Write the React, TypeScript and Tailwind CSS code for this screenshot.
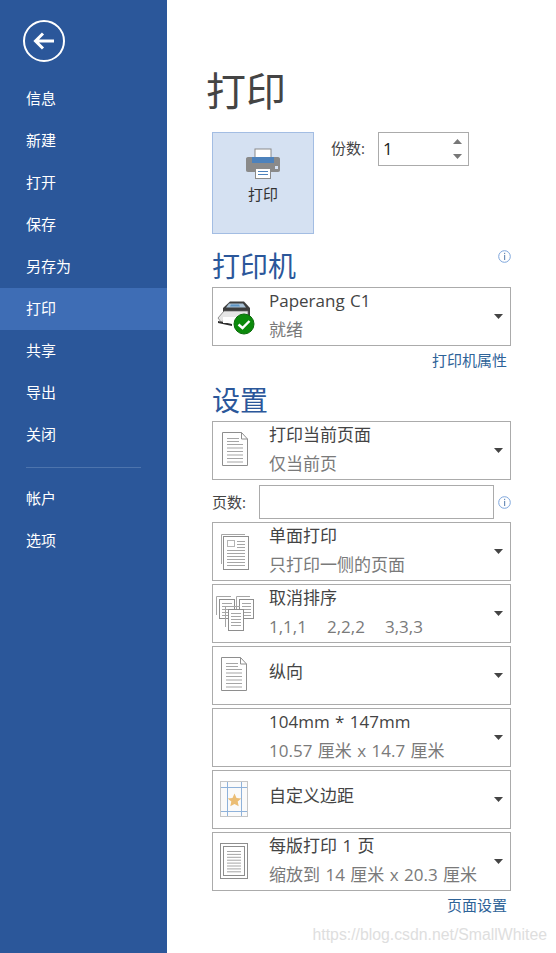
import React from "react";

const FONT = '"Open Sans","Noto Sans CJK SC",sans-serif';

const Lines = ({ x, y, w, n, gap = 3, c = "#a6a6a6" }: { x: number; y: number; w: number; n: number; gap?: number; c?: string }) => (
  <>
    {Array.from({ length: n }).map((_, i) => (
      <rect key={i} x={x} y={y + i * gap} width={w} height={1} fill={c} />
    ))}
  </>
);

const PageIcon = () => (
  <svg width="34" height="38" viewBox="0 0 34 38" fill="none" className="block">
    <path d="M5.5 .5H24.5L30.5 7V33.5H5.5Z" fill="#fff" stroke="#8e8e8e" />
    <path d="M24.5 .5V7H30.5" stroke="#8e8e8e" />
    <Lines x={10} y={6} w={12} n={2} />
    <Lines x={10} y={12} w={16} n={6} gap={3.5} />
  </svg>
);

const OneSidedIcon = () => (
  <svg width="34" height="40" viewBox="0 0 34 40" className="block">
    <path d="M5.5 32V2.500H29" fill="none" stroke="#a6a6a6" />
    <rect x="7.500" y="4.500" width="25" height="33" fill="#fff" stroke="#8e8e8e" />
    <rect x="11.500" y="8.500" width="7" height="6" fill="none" stroke="#b5b5b5" />
    <Lines x={21} y={9} w={8} n={3} gap={3} />
    <Lines x={11} y={18} w={18} n={6} gap={3} />
  </svg>
);

const CollateIcon = () => {
  const page = (x: number, y: number, w: number, h: number) => (
    <g>
      <path d={`M${x - 2.5} ${y + h - 3}V${y - 2.5}H${x + w - 3}`} fill="none" stroke="#a6a6a6" />
      <rect x={x + 0.5} y={y + 0.5} width={w} height={h} fill="#fff" stroke="#8e8e8e" />
      <Lines x={x + 3} y={y + 4} w={w - 5} n={5} gap={3} />
    </g>
  );
  return (
    <svg width="38" height="36" viewBox="0 0 38 36" className="block">
      {page(3, 3, 15, 19)}
      {page(23, 3, 14, 19)}
      {page(12, 13, 15, 21)}
    </svg>
  );
};

const MarginIcon = () => (
  <svg width="29" height="37" viewBox="0 0 29 37" className="block">
    <rect x=".5" y=".5" width="27" height="35" fill="#fafafa" stroke="#c6c6c6" />
    <path d="M1 6.5H27M1 30.5H27" stroke="#8fb2da" />
    <path d="M7.5 1V35M21.5 1V35" stroke="#8fb2da" />
    <path d="M14.5 12.5l2 4.4 4.8.5-3.6 3.2 1 4.7-4.2-2.4-4.2 2.4 1-4.7-3.6-3.2 4.8-.5z" fill="#ebbd74" />
  </svg>
);

const PerSheetIcon = () => (
  <svg width="29" height="37" viewBox="0 0 29 37" className="block">
    <rect x=".5" y=".5" width="27" height="35" fill="#fff" stroke="#8e8e8e" />
    <rect x="3.5" y="3.5" width="21" height="29" fill="#fff" stroke="#8e8e8e" />
    <Lines x={7} y={8} w={14} n={8} gap={2.9} />
  </svg>
);

const PrinterStatusIcon = () => (
  <svg width="38" height="36" viewBox="0 0 38 36" className="block">
    <path d="M6 9L13 2.500H27L33 9V19H6Z" fill="#3d3d3d" />
    <path d="M12 4.500H26L29 8.500H9Z" fill="#a8c0d4" />
    <path d="M14 5.500H22L23 7.500H13Z" fill="#5c94c4" />
    <path d="M1 19L7 12H31V20H10L4 23Z" fill="#e6e6e6" stroke="#666" strokeWidth=".7" />
    <path d="M1 22L15 25V27L1 24Z" fill="#2d2d2d" />
    <path d="M6 18H21V24H6Z" fill="#ffffff" />
    <circle cx="27" cy="25" r="10" fill="#0b8a0b" stroke="#0b6b0b" />
    <path d="M21.500 25.500L25.500 29L32.500 22" fill="none" stroke="#fff" strokeWidth="2.400" />
  </svg>
);

const BigPrinter = () => (
  <svg width="36" height="32" viewBox="0 0 36 32" className="block">
    <rect x="10" y="1" width="16" height="11" fill="#fff" stroke="#8a8a8a" />
    <path d="M3 9H7V15H29V9H33C34.5 9 35 10 35 11V22C35 23 34.500 24 33 24H3C1.500 24 1 23 1 22V11C1 10 1.500 9 3 9Z" fill="#8a8a8a" />
    <rect x="7" y="9" width="22" height="6" fill="#4d82bc" />
    <rect x="30" y="18" width="3" height="3" fill="#d5e1f2" />
    <rect x="10.500" y="20.500" width="15" height="10" fill="#fff" stroke="#8a8a8a" />
    <rect x="13" y="23" width="10" height="1" fill="#4d82bc" />
    <rect x="13" y="26" width="10" height="1" fill="#4d82bc" />
  </svg>
);

const Info = () => (
  <svg width="13" height="13" viewBox="0 0 13 13" className="block">
    <circle cx="6.500" cy="6.500" r="5.800" fill="none" stroke="#7ea6dc" />
    <rect x="6" y="2.800" width="1.200" height="1.300" fill="#6f8fb8" />
    <rect x="6" y="5" width="1.200" height="5" fill="#6f8fb8" />
  </svg>
);

const Caret = () => (
  <svg width="9" height="5" viewBox="0 0 9 5" className="block">
    <path d="M0 0H9L4.500 5Z" fill="#444" />
  </svg>
);

type RowProps = { icon?: React.ReactNode; title: string; sub?: React.ReactNode; iconClass?: string };

const Row = ({ icon, title, sub, iconClass = "pl-[7px]" }: RowProps) => (
  <div className="flex h-[59px] w-[299px] shrink-0 border border-[#ababab] bg-white">
    <div className={`flex w-[56px] shrink-0 items-center ${iconClass}`}>{icon}</div>
    <div className={`flex min-w-0 flex-1 flex-col ${sub ? "pt-[1px]" : "justify-center pb-[7px]"}`}>
      <div className="h-[24px] text-[17px] leading-[24px] text-[#444] whitespace-nowrap [word-spacing:1px]">{title}</div>
      {sub ? <div className="mt-[5px] h-[24px] text-[17px] leading-[24px] text-[#7a7a7a] whitespace-nowrap [word-spacing:1px]">{sub}</div> : null}
    </div>
    <div className="flex w-[16px] shrink-0 items-center">
      <Caret />
    </div>
  </div>
);

const NAV_TOP = ["信息", "新建", "打开", "保存", "另存为", "打印", "共享", "导出", "关闭"];
const NAV_BOTTOM = ["帐户", "选项"];

const NavItem = ({ label, active }: { label: string; active?: boolean }) => (
  <div className={`flex h-[42px] items-center pb-[2px] pl-[26px] text-[15px] text-white ${active ? "bg-[#3e6db5]" : ""}`}>{label}</div>
);

export default function App() {
  return (
    <div className="relative flex h-[953px] w-[556px] overflow-hidden bg-white" style={{ fontFamily: FONT }}>
      <aside className="flex h-full w-[167px] shrink-0 flex-col bg-[#2b579a]">
        <div className="flex h-[78px] items-start pl-[23px] pt-[20px]">
          <div className="flex h-[42px] w-[42px] items-center justify-center rounded-full border-2 border-white">
            <svg width="22" height="18" viewBox="0 0 22 18">
              <path d="M21 9H3M10 1.500L2.500 9L10 16.500" fill="none" stroke="#fff" strokeWidth="3" />
            </svg>
          </div>
        </div>
        {NAV_TOP.map((l) => (
          <NavItem key={l} label={l} active={l === "打印"} />
        ))}
        <div className="ml-[26px] mt-[11px] mb-[10px] h-px w-[115px] bg-[#4d74ad]" />
        {NAV_BOTTOM.map((l) => (
          <NavItem key={l} label={l} />
        ))}
      </aside>

      <main className="flex min-w-0 flex-1 flex-col pl-[45px]">
        <h1 className="mt-[62px] -ml-[6px] h-[58px] text-[40px] font-normal leading-[58px] text-[#444]">打印</h1>

        <div className="mt-[12px] flex items-start">
          <div className="flex h-[102px] w-[102px] shrink-0 flex-col items-center border border-[#a3bde3] bg-[#d5e1f2] pt-[15px]">
            <BigPrinter />
            <div className="mt-[4px] text-[15px] leading-[20px] text-[#333]">打印</div>
          </div>
          <div className="ml-[17px] mt-[6px] w-[47px] text-[15px] leading-[20px] text-[#444]">份数:</div>
          <div className="flex h-[34px] w-[91px] items-center justify-between border border-[#ababab] pl-[4px] pr-[6px]">
            <span className="text-[17px] text-[#222]">1</span>
            <div className="flex flex-col gap-[10px]">
              <svg width="9" height="5" viewBox="0 0 9 5" className="block"><path d="M4.500 0L9 5H0Z" fill="#777" /></svg>
              <svg width="9" height="5" viewBox="0 0 9 5" className="block"><path d="M0 0H9L4.500 5Z" fill="#777" /></svg>
            </div>
          </div>
        </div>

        <div className="mt-[12px] flex w-[299px] items-start justify-between">
          <h2 className="mb-[1px] h-[40px] text-[28px] font-normal leading-[40px] text-[#2b579a]">打印机</h2>
          <div className="mt-[4px]"><Info /></div>
        </div>
        <Row icon={<PrinterStatusIcon />} iconClass="pl-[4px]" title="Paperang C1" sub="就绪" />
        <div className="w-[295px] pt-[4px] text-right text-[15px] leading-[20px] text-[#2e6398]">打印机属性</div>

        <h2 className="mt-[10px] mb-[1px] h-[40px] text-[28px] font-normal leading-[40px] text-[#2b579a]">设置</h2>
        <Row icon={<PageIcon />} title="打印当前页面" sub="仅当前页" iconClass="pl-[4px]" />
        <div className="mb-[3px] mt-[5px] flex h-[34px] w-[299px] items-center">
          <span className="w-[47px] text-[15px] text-[#444]">页数:</span>
          <div className="h-[34px] w-[235px] border border-[#ababab]" />
          <div className="ml-[4px]"><Info /></div>
        </div>
        <div className="flex flex-col gap-[3px]">
          <Row icon={<OneSidedIcon />} iconClass="pl-[3px]" title="单面打印" sub="只打印一侧的页面" />
          <Row
            icon={<CollateIcon />}
            iconClass="pl-[3px]"
            title="取消排序"
            sub={
              <>
                <span className="inline-block w-[58px]">1,1,1</span>
                <span className="inline-block w-[58px]">2,2,2</span>
                <span>3,3,3</span>
              </>
            }
          />
          <Row icon={<PageIcon />} iconClass="pl-[3px]" title="纵向" />
          <Row title="104mm * 147mm" sub="10.57 厘米 x 14.7 厘米" />
          <Row icon={<MarginIcon />} title="自定义边距" />
          <Row icon={<PerSheetIcon />} title="每版打印 1 页" sub="缩放到 14 厘米 x 20.3 厘米" />
        </div>
        <div className="w-[295px] pt-[4px] text-right text-[15px] leading-[20px] text-[#2e6398]">页面设置</div>
      </main>

      <div className="absolute bottom-[7px] right-[9px] text-[15.800px] leading-[22px] text-[#dedede]" style={{ fontFamily: '"Liberation Sans",sans-serif' }}>
        https://blog.csdn.net/SmallWhitee
      </div>
    </div>
  );
}
